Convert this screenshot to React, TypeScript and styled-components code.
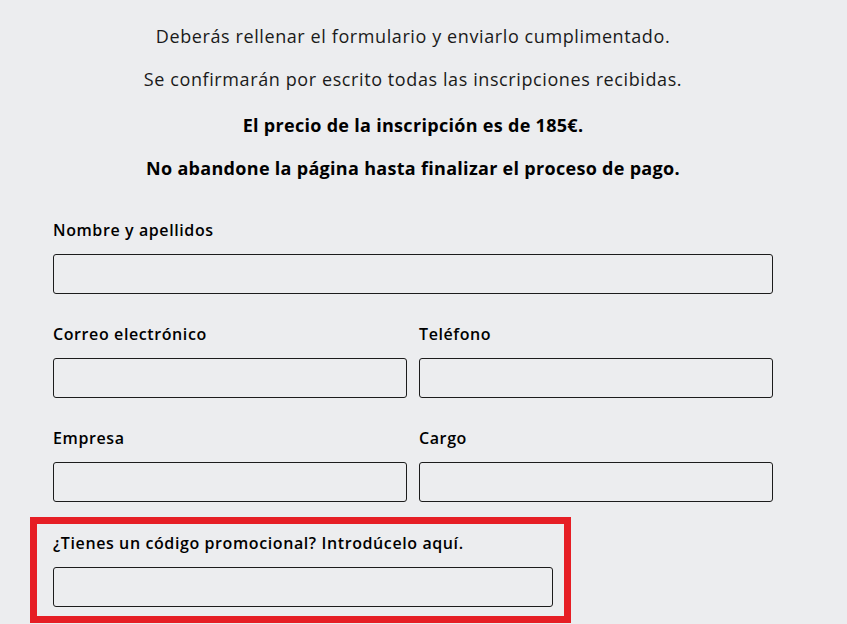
import React from 'react';
import styled, { createGlobalStyle } from 'styled-components';

const GlobalStyle = createGlobalStyle`
  html, body {
    margin: 0;
    padding: 0;
    background: #ecedef;
  }
  body {
    font-family: 'Open Sans', 'Liberation Sans', sans-serif;
    color: #111;
  }
`;

const Page = styled.div`
  padding: 23px 0 0 53px;
  width: 720px;
`;

const Intro = styled.div`
  display: flex;
  flex-direction: column;
  align-items: center;
  text-align: center;
`;

const Line = styled.p<{ $bold?: boolean; $top?: number }>`
  margin: ${(p) => p.$top ?? 0}px 0 17px;
  font-size: 18px;
  line-height: 26px;
  font-weight: ${(p) => (p.$bold ? 700 : 400)};
  letter-spacing: ${(p) => (p.$bold ? 0.3 : 0.6)}px;
  color: ${(p) => (p.$bold ? '#000' : '#1a1a1a')};
`;

const Form = styled.form`
  display: flex;
  flex-direction: column;
  gap: 29px;
  margin-top: 21px;
`;

const Row = styled.div<{ $cols?: number }>`
  display: grid;
  grid-template-columns: repeat(${(p) => p.$cols ?? 1}, 1fr);
  column-gap: 12px;
`;

const Field = styled.label`
  display: flex;
  flex-direction: column;
  gap: 13px;
`;

const Label = styled.span`
  font-size: 16px;
  line-height: 22px;
  font-weight: 600;
  letter-spacing: 0.6px;
  color: #000;
`;

const Input = styled.input<{ $width?: number }>`
  box-sizing: border-box;
  height: 40px;
  width: ${(p) => (p.$width ? `${p.$width}px` : '100%')};
  background: transparent;
  border: 1px solid #1c1c1c;
  border-radius: 3px;
  outline: none;
  padding: 0 10px;
  font: inherit;
`;

const Promo = styled.div`
  box-sizing: border-box;
  width: 541px;
  margin-left: -23px;
  margin-top: -14px;
  border: 7px solid #e61e25;
  padding: 8px 10px 9px 16px;
`;

export default function App() {
  return (
    <>
      <GlobalStyle />
      <Page>
        <Intro>
          <Line>Deberás rellenar el formulario y enviarlo cumplimentado.</Line>
          <Line>Se confirmarán por escrito todas las inscripciones recibidas.</Line>
          <Line $bold $top={3}>El precio de la inscripción es de 185€.</Line>
          <Line $bold>No abandone la página hasta finalizar el proceso de pago.</Line>
        </Intro>
        <Form onSubmit={(e) => e.preventDefault()}>
          <Row>
            <Field>
              <Label>Nombre y apellidos</Label>
              <Input type="text" />
            </Field>
          </Row>
          <Row $cols={2}>
            <Field>
              <Label>Correo electrónico</Label>
              <Input type="email" />
            </Field>
            <Field>
              <Label>Teléfono</Label>
              <Input type="tel" />
            </Field>
          </Row>
          <Row $cols={2}>
            <Field>
              <Label>Empresa</Label>
              <Input type="text" />
            </Field>
            <Field>
              <Label>Cargo</Label>
              <Input type="text" />
            </Field>
          </Row>
          <Promo>
            <Field>
              <Label>¿Tienes un código promocional? Introdúcelo aquí.</Label>
              <Input type="text" $width={500} />
            </Field>
          </Promo>
        </Form>
      </Page>
    </>
  );
}
